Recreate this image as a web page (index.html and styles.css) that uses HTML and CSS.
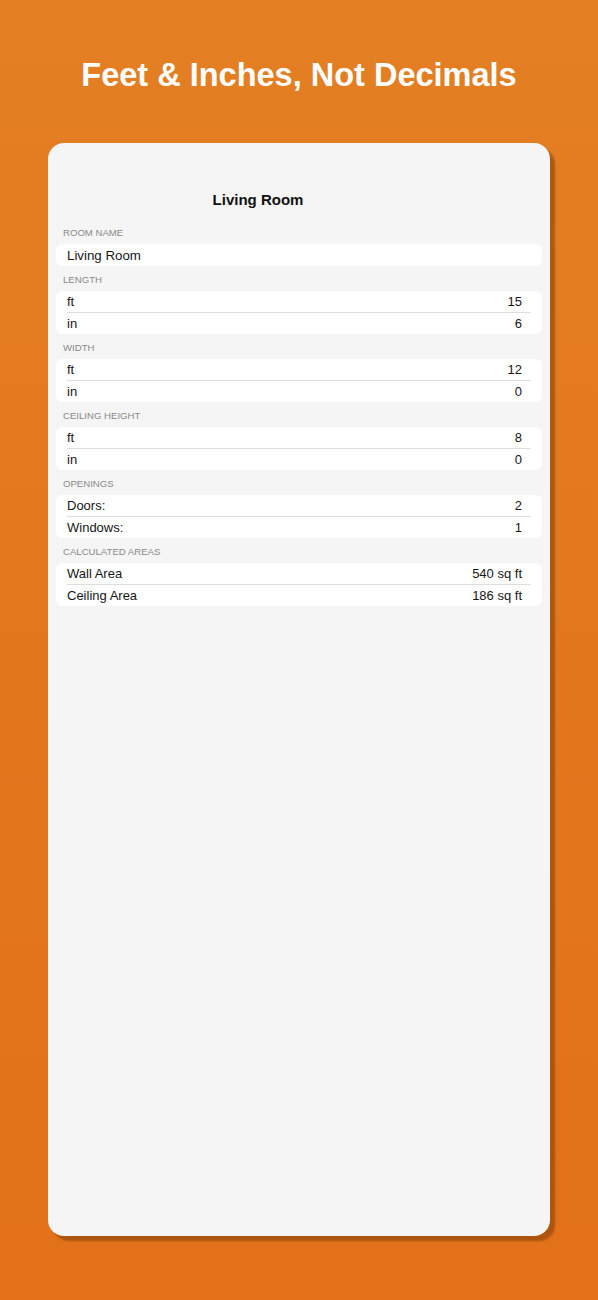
FILE: index.html
```html
<!DOCTYPE html>
<html lang="en">
<head>
    <meta charset="UTF-8">
    <meta name="viewport" content="width=device-width, initial-scale=1.0">
    <title>Feet &amp; Inches, Not Decimals</title>
    <link rel="stylesheet" href="styles.css">
</head>
<body>
    <header class="hero">
        <h1>Feet &amp; Inches, Not Decimals</h1>
    </header>
    <main class="card">
        <h2 class="room-title">Living Room</h2>

        <div class="section-label">Room Name</div>
        <div class="group">
            <div class="row name-row">Living Room</div>
        </div>

        <div class="section-label">Length</div>
        <div class="group">
            <div class="row"><span>ft</span><span class="value">15</span></div>
            <div class="row"><span>in</span><span class="value">6</span></div>
        </div>

        <div class="section-label">Width</div>
        <div class="group">
            <div class="row"><span>ft</span><span class="value">12</span></div>
            <div class="row"><span>in</span><span class="value">0</span></div>
        </div>

        <div class="section-label">Ceiling Height</div>
        <div class="group">
            <div class="row"><span>ft</span><span class="value">8</span></div>
            <div class="row"><span>in</span><span class="value">0</span></div>
        </div>

        <div class="section-label">Openings</div>
        <div class="group">
            <div class="row"><span>Doors:</span><span class="value">2</span></div>
            <div class="row"><span>Windows:</span><span class="value">1</span></div>
        </div>

        <div class="section-label">Calculated Areas</div>
        <div class="group">
            <div class="row"><span>Wall Area</span><span class="value">540 sq ft</span></div>
            <div class="row"><span>Ceiling Area</span><span class="value">186 sq ft</span></div>
        </div>
    </main>
</body>
</html>
```

FILE: styles.css
```css
body, html {
    margin: 0;
    height: 100%;
}
body {
    font-family: "Liberation Sans", Arial, sans-serif;
    background: linear-gradient(180deg, #E47F23 0%, #E3771E 50%, #E27119 100%);
    min-height: 1300px;
    overflow: hidden;
}
.hero {
    height: 143px;
    box-sizing: border-box;
    padding-top: 55px;
}
.hero h1 {
    margin: 0;
    color: #FFF;
    font-size: 32.5px;
    line-height: 40px;
    font-weight: bold;
    text-align: center;
}
.card {
    display: block;
    margin: 0 48px;
    height: 1093px;
    box-sizing: border-box;
    padding: 0 8px;
    background-color: #F5F5F5;
    border-radius: 16px;
    box-shadow: 5px 5px 2px rgba(130, 60, 5, 0.55);
}
.room-title {
    margin: 0;
    padding: 46px 82px 8px 0;
    font-size: 15px;
    line-height: 22px;
    font-weight: bold;
    color: #111;
    text-align: center;
}
.section-label {
    padding: 8px 0 5px 7px;
    font-size: 9.6px;
    line-height: 12px;
    color: #8A8A8A;
    text-transform: uppercase;
}
.group {
    background-color: #FFF;
    border-radius: 6px;
}
.row {
    position: relative;
    display: flex;
    justify-content: space-between;
    align-items: center;
    height: 21px;
    padding: 0 20px 0 11px;
    font-size: 13px;
    color: #161616;
}
.row + .row {
    margin-top: 1px;
}
.row + .row::before {
    content: '';
    position: absolute;
    top: -1px;
    left: 11px;
    right: 11px;
    height: 1px;
    background-color: #DEDEDE;
}
.name-row {
    height: 22px;
    font-size: 13.3px;
}
```
